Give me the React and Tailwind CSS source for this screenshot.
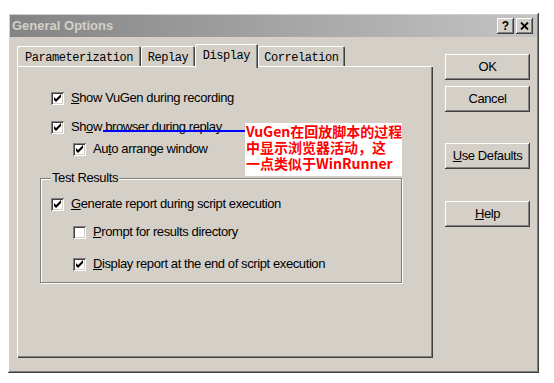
import React from 'react'

const raised =
  'shadow-[inset_-1px_-1px_#404040,inset_1px_1px_#ffffff,inset_-2px_-2px_#808080,inset_2px_2px_#d4d0c8]'

const Check = ({ checked }) => (
  <span className="w-[13px] h-[13px] shrink-0 bg-white shadow-[inset_1px_1px_#808080,inset_-1px_-1px_#ffffff,inset_2px_2px_#404040,inset_-2px_-2px_#d4d0c8]">
    {checked && (
      <svg width="13" height="13" viewBox="0 0 13 13">
        <polygon points="3,5 5,7 10,2 10,5 5,10 3,8" fill="#000" />
      </svg>
    )}
  </span>
)

const Option = ({ checked, before, mn, after, className = '' }) => (
  <div className={`flex items-center h-[16px] gap-[7px] ${className}`}>
    <Check checked={checked} />
    <span className="leading-[16px] whitespace-nowrap">
      {before}
      <u>{mn}</u>
      {after}
    </span>
  </div>
)

const Button = ({ before = '', mn, after, className = '' }) => (
  <div
    className={`w-[85px] h-[26px] flex items-center justify-center bg-[#d4d0c8] ${raised} ${className}`}
  >
    <span>
      {before}
      {mn && <u>{mn}</u>}
      {after}
    </span>
  </div>
)

const tabs = [
  { label: 'Parameterization', w: 'w-[124px]' },
  { label: 'Replay', w: 'w-[54px]' },
  { label: 'Display', w: 'w-[63px]', active: true },
  { label: 'Correlation', w: 'w-[87px]' },
]

export default function App() {
  return (
    <div
      className="w-[554px] h-[383px] bg-white pt-[13px] pl-[8px] text-black text-[13px] tracking-[-0.4px]"
      style={{ fontFamily: '"Liberation Sans", Arial, sans-serif' }}
    >
      <div
        className={`w-[531px] h-[360px] bg-[#d4d0c8] p-[2px] flex flex-col ${raised}`}
      >
        {/* title bar */}
        <div className="h-[22px] flex items-center justify-between bg-gradient-to-r from-[#848484] to-[#c4c4c4] pl-[2px] pr-[4px]">
          <span className="text-[13px] font-bold text-[#d4d0c8] tracking-normal">General Options</span>
          <div className="flex gap-[2px]">
            <div className={`w-[17px] h-[16px] flex items-center justify-center bg-[#d4d0c8] ${raised}`}>
              <span className="text-[12px] font-bold leading-none tracking-normal">?</span>
            </div>
            <div className={`w-[17px] h-[16px] flex items-center justify-center bg-[#d4d0c8] ${raised}`}>
              <svg width="9" height="8" viewBox="0 0 9 8">
                <path d="M1 0.5 L8 7.5 M8 0.5 L1 7.5" stroke="#000" strokeWidth="1.8" />
              </svg>
            </div>
          </div>
        </div>

        {/* body */}
        <div className="flex pl-[7px] pt-[7px]">
          <div className="w-[416px]">
            <div
              className="h-[22px] flex items-end text-[12px] tracking-[-0.45px]"
              style={{ fontFamily: '"Liberation Mono", "Courier New", monospace' }}
            >
              {tabs.map(t =>
                t.active ? (
                  <div
                    key={t.label}
                    className={`${t.w} h-[24px] -mb-[2px] relative z-10 flex justify-center pt-[3px] bg-[#d4d0c8] rounded-t-[2px] shadow-[inset_1px_1px_#ffffff,inset_-1px_0_#404040,inset_-2px_0_#808080]`}
                  >
                    {t.label}
                  </div>
                ) : (
                  <div
                    key={t.label}
                    className={`${t.w} h-[20px] flex justify-center pt-[3px] bg-[#d4d0c8] rounded-t-[2px] shadow-[inset_1px_1px_#ffffff,inset_-1px_0_#404040,inset_-2px_0_#808080]`}
                  >
                    {t.label}
                  </div>
                )
              )}
            </div>

            {/* tab page */}
            <div className="relative h-[292px] pl-[23px] pt-[24px] shadow-[inset_1px_1px_#ffffff,inset_-1px_-1px_#404040,inset_-2px_-2px_#808080]">
              <Option className="ml-[11px]" checked before="" mn="S" after="how VuGen during recording" />
              <Option className="ml-[11px] mt-[13px]" checked before="Sh" mn="o" after="w browser during replay" />
              <Option className="ml-[33px] mt-[6px]" checked before="Au" mn="t" after="o arrange window" />

              <fieldset className="w-[362px] mt-[13px] pt-[10px] pb-[10px] border border-[#808080] shadow-[inset_1px_1px_#ffffff,1px_1px_#ffffff]">
                <legend className="ml-[10px] px-[1px] leading-[16px] bg-[#d4d0c8]">Test Results</legend>
                <Option className="ml-[10px]" checked before="" mn="G" after="enerate report during script execution" />
                <Option className="ml-[32px] mt-[12px]" before="" mn="P" after="rompt for results directory" />
                <Option className="ml-[32px] mt-[16px]" checked before="" mn="D" after="isplay report at the end of script execution" />
              </fieldset>

              {/* annotation overlay */}
              <div className="absolute left-[86px] top-[64px] w-[142px] h-[2px] bg-[#0000ff]" />
              <div
                className="absolute left-[228px] top-[57px] w-[157px] h-[53px] bg-white pl-[1px] text-[#ff0000] font-bold text-[14px] leading-[16px] tracking-normal whitespace-nowrap"
                style={{ fontFamily: '"Noto Sans CJK SC", "Noto Sans", sans-serif' }}
              >
                <div>VuGen在回放脚本的过程</div>
                <div>中显示浏览器活动，这</div>
                <div>一点类似于WinRunner</div>
              </div>
            </div>
          </div>

          {/* buttons */}
          <div className="ml-[12px] mt-[10px] flex flex-col">
            <Button after="OK" />
            <Button className="mt-[6px]" after="Cancel" />
            <Button className="mt-[31px]" mn="U" after="se Defaults" />
            <Button className="mt-[32px]" mn="H" after="elp" />
          </div>
        </div>
      </div>
    </div>
  )
}
